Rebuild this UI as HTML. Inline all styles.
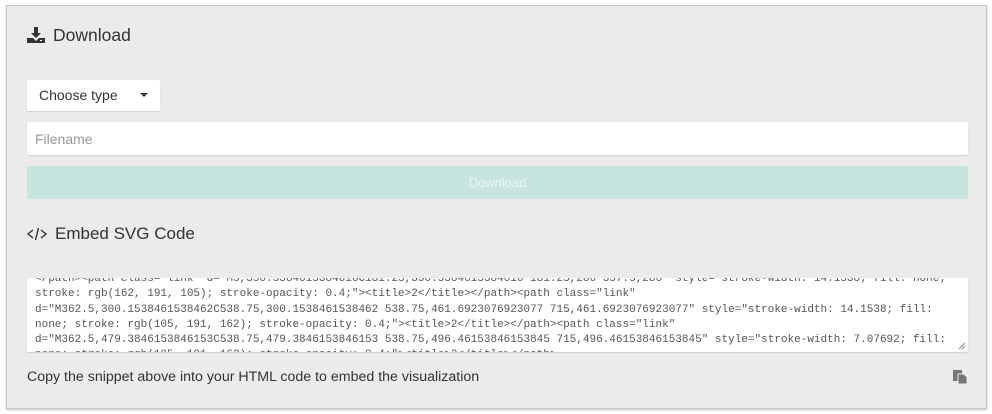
<!DOCTYPE html>
<html><head><meta charset="utf-8"><style>
html,body{margin:0;padding:0;background:#fff;width:992px;height:414px;overflow:hidden;font-family:"Liberation Sans",sans-serif;}
.panel{position:absolute;left:6px;top:5px;width:979px;height:402px;background:#ebebeb;border:1px solid #c8c8c8;box-shadow:0 1px 2px rgba(0,0,0,.25);}
.abs{position:absolute;}
h2{position:absolute;margin:0;font-weight:normal;font-size:17px;color:#333;}
.sel{left:27px;top:80px;width:133px;height:31px;background:#fff;border-radius:2px;box-shadow:0 1px 1px rgba(0,0,0,.12);font-size:14px;color:#333;}
.inp{left:27px;top:122px;width:941px;height:33px;background:#fff;border-radius:2px;box-shadow:0 1px 1px rgba(0,0,0,.12);font-size:14px;color:#999;}
.btn{left:27px;top:166px;width:941px;height:33px;background:#c7e4de;border-radius:2px;color:#e9f5f2;font-size:13px;text-align:center;line-height:33px;}
.ta{left:27px;top:278px;width:941px;height:74px;background:#fff;border-radius:2px;overflow:hidden;box-shadow:0 1px 1px rgba(0,0,0,.12);}
.code{position:absolute;left:8px;top:-6px;font-family:"Liberation Mono",monospace;font-size:11px;line-height:15.3px;color:#555;white-space:pre;}
</style></head><body>
<div class="panel"></div>
<svg class="abs" style="left:27px;top:27px" width="18" height="16" viewBox="0 0 18 16"><path d="M7 0h4v6h3l-5 5-5-5h3z" fill="#333"/><path d="M0 11h6l3 3 3-3h6v5H0z" fill="#333"/><rect x="13" y="13" width="2" height="1" fill="#fff"/></svg>
<h2 style="left:53px;top:25px;font-size:17.5px">Download</h2>
<div class="abs sel"><span class="abs" style="left:12px;top:7px">Choose type</span><svg class="abs" style="left:113px;top:13px" width="8" height="5"><path d="M0 0h8L4 4z" fill="#333"/></svg></div>
<div class="abs inp"><span class="abs" style="left:8px;top:9px">Filename</span></div>
<div class="abs btn">Download</div>
<svg class="abs" style="left:27px;top:227px" width="20" height="14" viewBox="0 0 20 14"><path d="M6 3L1 7l5 4M14 3l5 4-5 4M11.5 1L8.5 13" stroke="#333" stroke-width="1.4" fill="none"/></svg>
<h2 style="left:55px;top:224px">Embed SVG Code</h2>
<div class="abs ta"><div class="code">&lt;/path&gt;&lt;path class="link" d="M5,350.5384615384616C181.25,350.5384615384616 181.25,286 357.5,286" style="stroke-width: 14.1538; fill: none;
stroke: rgb(162, 191, 105); stroke-opacity: 0.4;"&gt;&lt;title&gt;2&lt;/title&gt;&lt;/path&gt;&lt;path class="link"
d="M362.5,300.1538461538462C538.75,300.1538461538462 538.75,461.6923076923077 715,461.6923076923077" style="stroke-width: 14.1538; fill:
none; stroke: rgb(105, 191, 162); stroke-opacity: 0.4;"&gt;&lt;title&gt;2&lt;/title&gt;&lt;/path&gt;&lt;path class="link"
d="M362.5,479.3846153846153C538.75,479.3846153846153 538.75,496.46153846153845 715,496.46153846153845" style="stroke-width: 7.07692; fill:
none; stroke: rgb(105, 191, 162); stroke-opacity: 0.4;"&gt;&lt;title&gt;2&lt;/title&gt;&lt;/path&gt;</div>
<svg class="abs" style="right:2px;bottom:2px" width="8" height="8"><path d="M7 1L1 7M7 4L4 7" stroke="#888" stroke-width="1"/></svg></div>
<div class="abs" style="left:27px;top:369px;font-size:14.2px;color:#333">Copy the snippet above into your HTML code to embed the visualization</div>
<svg class="abs" style="left:953px;top:370px" width="14" height="14" viewBox="0 0 14 14"><rect x="0" y="0" width="9" height="11" fill="#777"/><path d="M5 4h6l3 3v7H5z" fill="#777" stroke="#ebebeb" stroke-width="1"/></svg>
</body></html>
